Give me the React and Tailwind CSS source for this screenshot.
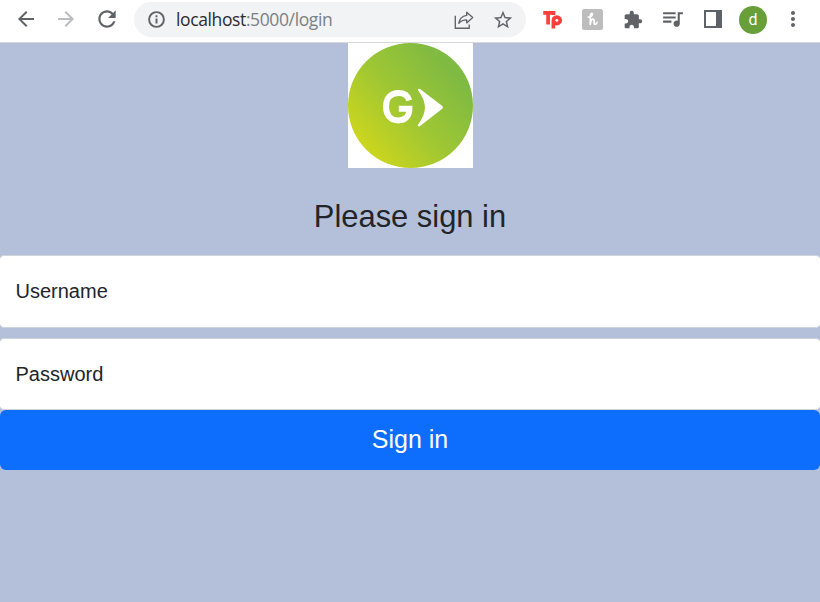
import React from "react";

function Cell({ children }) {
  return <div className="flex h-10 w-10 shrink-0 items-center justify-center">{children}</div>;
}

function Icon({ d, className }) {
  return (
    <svg viewBox="0 0 24 24" className={className} fill="currentColor" aria-hidden="true">
      <path d={d} />
    </svg>
  );
}

function Toolbar() {
  return (
    <header className="flex h-[43px] items-start border-b border-[#d5d8dd] bg-white pl-1.5 text-[#5f6368]">
      <Cell>
        <Icon className="mb-0.5 h-6 w-6" d="M20 11H7.83l5.59-5.59L12 4l-8 8 8 8 1.41-1.41L7.83 13H20v-2z" />
      </Cell>
      <Cell>
        <Icon className="mb-0.5 h-6 w-6 text-[#babcbe]" d="M12 4l-1.41 1.41L16.17 11H4v2h12.17l-5.58 5.59L12 20l8-8z" />
      </Cell>
      <Cell>
        <Icon
          className="mb-0.5 ml-px h-[26px] w-[26px]"
          d="M17.65 6.35C16.2 4.9 14.21 4 12 4c-4.42 0-7.99 3.58-7.99 8s3.57 8 7.99 8c3.73 0 6.84-2.55 7.73-6h-2.08c-.82 2.33-3.04 4-5.65 4-3.31 0-6-2.69-6-6s2.69-6 6-6c1.66 0 3.14.69 4.22 1.78L13 11h7V4l-2.35 2.35z"
        />
      </Cell>
      <div className="mt-0.5 ml-2 flex h-[35px] w-[392px] shrink-0 items-center rounded-full bg-[#f1f3f4] pl-[14px]">
        <svg viewBox="0 0 17 17" className="h-[17px] w-[17px] shrink-0" fill="none" stroke="currentColor" strokeWidth="1.9" aria-hidden="true">
          <circle cx="8.5" cy="8.5" r="7.4" />
          <path d="M8.5 7.6v4.9M8.5 4.3v1.9" />
        </svg>
        <span className="ml-[11px] whitespace-nowrap font-['Open_Sans','Noto_Sans',sans-serif] text-[17.5px] leading-[35px] tracking-[-0.38px] text-[#7b8085]">
          <span className="text-[#2b2c30]">localhost</span>:5000/login
        </span>
        <svg viewBox="0 0 20 20" className="ml-auto h-5 w-5" fill="none" stroke="currentColor" strokeWidth="1.35" aria-hidden="true">
          <path d="M1.3 5.7v12.5h13.9v-3.8" />
          <path strokeLinejoin="round" d="M12.7 2.2l6 5.4-6 5.3v-3.1c-3.7 0-5.9 1.1-7.8 3.6.5-4.4 3.3-7.4 7.8-8z" />
        </svg>
        <Icon
          className="mr-[12px] ml-[18px] h-[22px] w-[22px]"
          d="M22 9.24l-7.19-.62L12 2 9.19 8.63 2 9.24l5.46 4.73L5.82 21 12 17.27 18.18 21l-1.63-7.03L22 9.24zM12 15.4l-3.76 2.27 1-4.28-3.32-2.88 4.38-.38L12 6.1l1.71 4.04 4.38.38-3.32 2.88 1 4.28L12 15.4z"
        />
      </div>
      <div className="ml-1.5 flex">
        <Cell>
          <svg viewBox="0 0 20 20" className="h-5 w-5" fill="none" stroke="#fa403d" strokeWidth="3.7" aria-hidden="true">
            <path d="M1.3 2.8h10.2v2.1M6.1 2.7v11.8" />
            <path d="M11.4 18.5V10.2a3.4 3.2 0 1 1 0 .2" />
          </svg>
        </Cell>
        <Cell>
          <svg viewBox="0 0 21 21" className="mb-px h-[21px] w-[21px]" aria-hidden="true">
            <rect width="21" height="21" rx="2.5" fill="#bdbdbd" />
            <path
              d="M6.2 8c2.5 0 4.6-1.7 4.2-3.1-.4-1.3-2.1-.3-2.1 2.2v8.2c.4-3.2 1.4-5.1 2.8-5.1 2.1 0 .1 5.2 1.9 5.2.9 0 1.6-.8 2-1.9"
              fill="none"
              stroke="white"
              strokeWidth="1.7"
              strokeLinecap="round"
              strokeLinejoin="round"
            />
          </svg>
        </Cell>
        <Cell>
          <Icon
            className="mb-px ml-px h-5 w-5"
            d="M20.5 11H19V7c0-1.1-.9-2-2-2h-4V3.5C13 2.12 11.88 1 10.5 1S8 2.12 8 3.5V5H4c-1.1 0-1.99.9-1.99 2v3.8H3.5c1.49 0 2.7 1.21 2.7 2.7s-1.21 2.7-2.7 2.7H2V20c0 1.1.9 2 2 2h3.8v-1.5c0-1.49 1.21-2.7 2.7-2.7 1.49 0 2.7 1.21 2.7 2.7V22H17c1.1 0 2-.9 2-2v-4h1.5c1.38 0 2.5-1.12 2.5-2.5S21.88 11 20.5 11z"
          />
        </Cell>
        <Cell>
          <Icon
            className="mb-1 h-[25px] w-[25px]"
            d="M15 6H3v2h12V6zm0 4H3v2h12v-2zM3 16h8v-2H3v2zM17 6v8.18c-.31-.11-.65-.18-1-.18-1.66 0-3 1.34-3 3s1.34 3 3 3 3-1.34 3-3V8h3V6h-5z"
          />
        </Cell>
        <Cell>
          <div className="mb-0.5 ml-0.5 h-[18px] w-[18px] border-2 border-r-[6px] border-[#5f6368]" />
        </Cell>
        <Cell>
          <div className="ml-0.5 flex h-7 w-7 items-center justify-center rounded-full bg-[#689f38] font-['Roboto',sans-serif] text-base leading-none text-white">
            d
          </div>
        </Cell>
        <Cell>
          <Icon
            className="mb-0.5 ml-0.5 h-6 w-6"
            d="M12 8c1.1 0 2-.9 2-2s-.9-2-2-2-2 .9-2 2 .9 2 2 2zm0 2c-1.1 0-2 .9-2 2s.9 2 2 2 2-.9 2-2-.9-2-2-2zm0 6c-1.1 0-2 .9-2 2s.9 2 2 2 2-.9 2-2-.9-2-2-2z"
          />
        </Cell>
      </div>
    </header>
  );
}

function Logo() {
  return (
    <svg viewBox="0 0 125 125" className="ml-[348px] block h-[125px] w-[125px] bg-white" aria-hidden="true">
      <defs>
        <linearGradient id="leaf" x1="0.08" y1="0.85" x2="0.82" y2="0.2">
          <stop offset="0" stopColor="#d0d71b" />
          <stop offset="0.5" stopColor="#a0c733" />
          <stop offset="1" stopColor="#7fba42" />
        </linearGradient>
      </defs>
      <circle cx="62.5" cy="62.5" r="62.5" fill="url(#leaf)" />
      <path
        d="M61.3 57.3C59.8 52.4 56 50 50.4 50C42.4 50 38 55.6 38 63.7S42.4 77.4 50.4 77.4C57 77.4 61.4 73.4 61.4 65.8H50.8"
        fill="none"
        stroke="white"
        strokeWidth="6"
      />
      <path d="M70 47.2C69.4 45.8 71.3 45.3 72.4 46.3L94.3 63.1Q95.8 64.5 94.3 65.8L72.4 82.7C71 84 69.2 83.5 70 81.8C79.3 68.5 79.3 60.2 70 47.2Z" fill="white" />
    </svg>
  );
}

function Field({ label, className }) {
  return (
    <label className={`-mx-px flex items-center rounded-[5px] border border-[#ced4da] bg-white pl-[15.5px] text-[20px] leading-[30px] ${className}`}>
      {label}
    </label>
  );
}

export default function App() {
  return (
    <div className="flex h-[602px] w-[820px] flex-col overflow-hidden bg-[#b4c0d9] font-['Liberation_Sans',Arial,sans-serif] text-[#212529]">
      <Toolbar />
      <main>
        <Logo />
        <h1 className="mt-[30px] text-center text-[30.9px] leading-[37px]">Please sign in</h1>
        <form className="mt-5 flex flex-col">
          <Field label="Username" className="h-[73px] pb-0.5" />
          <Field label="Password" className="mt-2.5 h-[72px]" />
          <button type="button" className="h-[60px] rounded-[6px] bg-[#0d6efd] pb-0.5 text-[25px] leading-[37px] text-white">
            Sign in
          </button>
        </form>
      </main>
    </div>
  );
}
